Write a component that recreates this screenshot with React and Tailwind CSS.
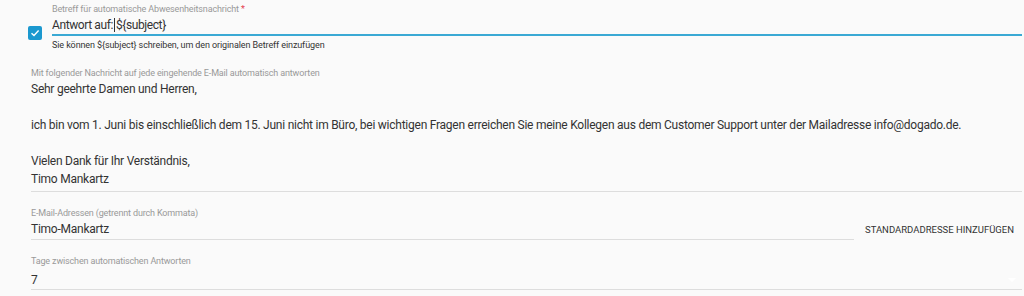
export default function App() {
  const font = { fontFamily: 'Roboto, "Liberation Sans", sans-serif' };

  return (
    <div className="w-[1024px] h-[296px] bg-[#fafafa] overflow-hidden text-[#333]" style={font}>
      {/* Betreff */}
      <div className="flex items-start pl-[28px] pr-[2px] pt-[3px]">
        <div className="mt-[23px] w-[14px] h-[14px] rounded-[2px] bg-[#1b98cf] flex items-center justify-center shrink-0">
          <svg width="10" height="10" viewBox="0 0 10 10" fill="none">
            <path d="M1.5 5.2 L4 7.5 L8.6 2.6" stroke="white" strokeWidth="1.4" />
          </svg>
        </div>
        <div className="ml-[10px] flex-1">
          <div className="text-[9px] leading-[12px] tracking-[-0.15px] text-[#999]">
            Betreff für automatische Abwesenheitsnachricht<span className="text-[#e4414f]"> *</span>
          </div>
          <div className="h-[21px] border-b-2 border-[#3aa9d4] text-[12px] leading-[19px] tracking-[-0.4px] pt-[1px]">
            Antwort auf:<span className="border-l border-[#333] mx-[1px]"></span>{'${subject}'}
          </div>
          <div className="text-[9px] leading-[12px] tracking-[-0.1px] mt-[3px]">
            Sie können {'${subject}'} schreiben, um den originalen Betreff einzufügen
          </div>
        </div>
      </div>

      {/* Nachricht */}
      <div className="pl-[31px] pr-[2px] mt-[16px]">
        <div className="text-[9px] leading-[12px] tracking-[-0.15px] text-[#999]">
          Mit folgender Nachricht auf jede eingehende E-Mail automatisch antworten
        </div>
        <div className="border-b border-[#ddd] text-[12px] leading-[18px] tracking-[-0.25px] pt-[1px] pb-[3px]">
          <div>Sehr geehrte Damen und Herren,</div>
          <div className="h-[18px]"></div>
          <div className="whitespace-nowrap">ich bin vom 1. Juni bis einschließlich dem 15. Juni nicht im Büro, bei wichtigen Fragen erreichen Sie meine Kollegen aus dem Customer Support unter der Mailadresse info@dogado.de.</div>
          <div className="h-[18px]"></div>
          <div>Vielen Dank für Ihr Verständnis,</div>
          <div>Timo Mankartz</div>
        </div>
      </div>

      {/* E-Mail-Adressen */}
      <div className="flex items-end pl-[31px] pr-[10px] mt-[15px]">
        <div className="w-[824px]">
          <div className="text-[9px] leading-[12px] tracking-[-0.15px] text-[#999]">
            E-Mail-Adressen (getrennt durch Kommata)
          </div>
          <div className="border-b border-[#ddd] text-[12px] leading-[18px] tracking-[-0.25px] pt-[1px] pb-[1px]">Timo-Mankartz</div>
        </div>
        <div className="ml-[11px] mb-[3px] text-[9.5px] leading-[14px] uppercase whitespace-nowrap">
          Standardadresse hinzufügen
        </div>
      </div>

      {/* Tage */}
      <div className="pl-[31px] pr-[2px] mt-[15px]">
        <div className="text-[9px] leading-[12px] tracking-[-0.15px] text-[#999]">
          Tage zwischen automatischen Antworten
        </div>
        <div className="flex items-center justify-between border-b border-[#ddd] text-[12px] leading-[18px] pt-[4px]">
          <span>7</span>
          <svg width="8" height="5" viewBox="0 0 8 5" className="mr-[6px]">
            <path d="M0 0 L8 0 L4 4 Z" fill="#ffffff" />
          </svg>
        </div>
      </div>
    </div>
  );
}
